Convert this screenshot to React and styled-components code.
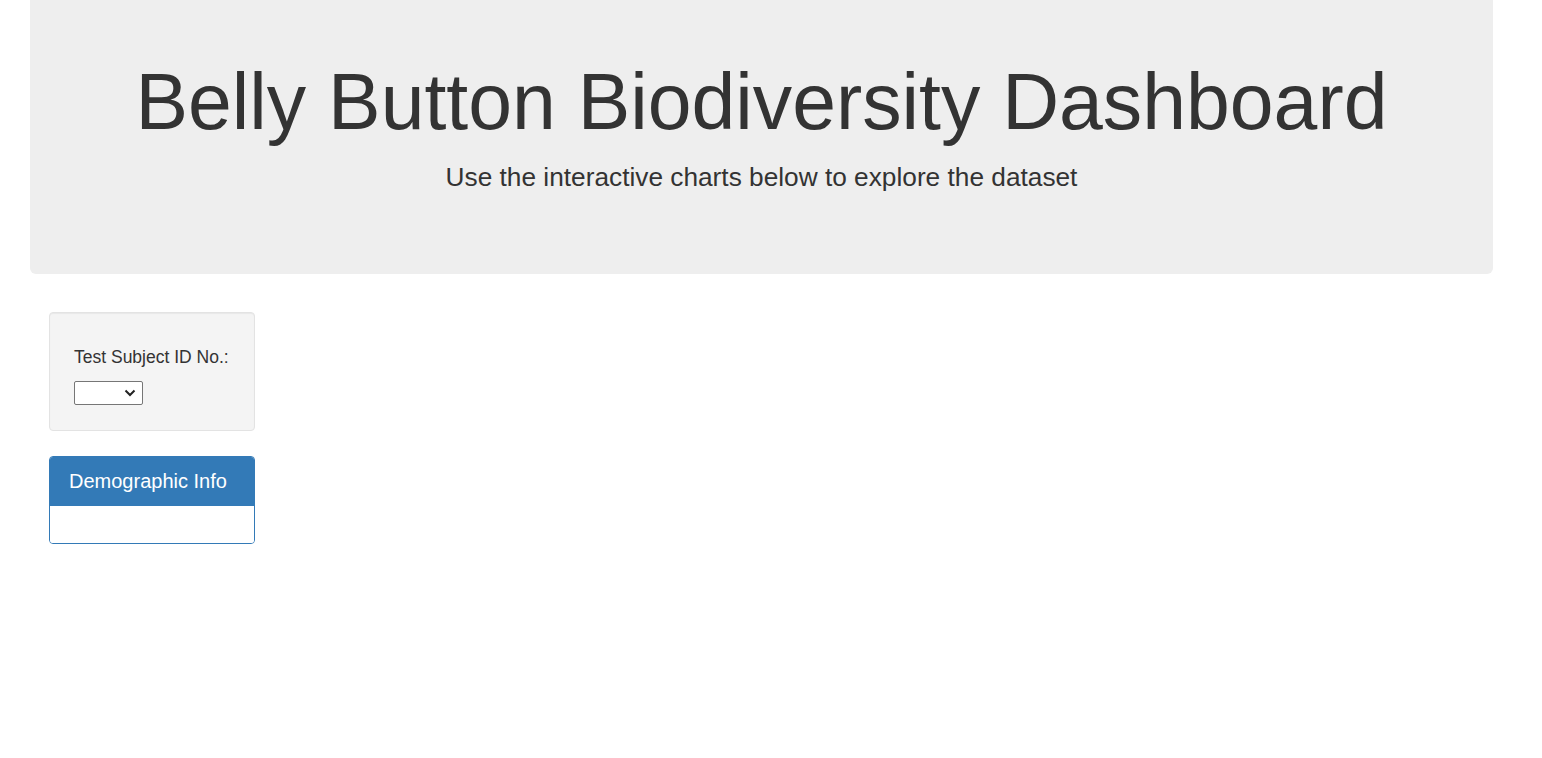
import React from "react";
import styled, { createGlobalStyle } from "styled-components";

const GlobalStyle = createGlobalStyle`
  body {
    margin: 0;
    background: #fff;
    color: #333;
    font-family: "Liberation Sans", Arial, sans-serif;
  }
`;

const Page = styled.div`
  padding: 0 30px;
  width: 1463px;
`;

const Jumbotron = styled.header`
  background-color: #eee;
  height: 274px;
  box-sizing: border-box;
  padding-top: 59px;
  border-radius: 0 0 6px 6px;
  text-align: center;
`;

const Title = styled.h1`
  margin: 0;
  font-size: 78.75px;
  font-weight: 400;
  line-height: 1.1;
  color: #333;
`;

const Lead = styled.p`
  margin: 13px 0 0;
  font-size: 26.25px;
  line-height: 1.4;
  color: #333;
`;

const Row = styled.div`
  display: flex;
  padding: 38px 0 0 19px;
`;

const Sidebar = styled.aside`
  width: 206px;
  display: flex;
  flex-direction: column;
  gap: 25px;
`;

const Well = styled.div`
  box-sizing: border-box;
  height: 119px;
  padding: 33px 20px 0 24px;
  background-color: #f4f4f4;
  border: 1px solid #e3e3e3;
  border-radius: 4px;
  box-shadow: inset 0 1px 1px rgba(0, 0, 0, 0.05);
`;

const Label = styled.label`
  display: block;
  font-size: 17.5px;
  line-height: 22px;
  color: #333;
  white-space: nowrap;
`;

const SelectBox = styled.div`
  position: relative;
  margin-top: 13px;
  width: 69px;
  height: 24px;
  box-sizing: border-box;
  border: 1px solid #767676;
  border-radius: 2px;
  background: #fff;
`;

const Chevron = styled.svg`
  position: absolute;
  right: 6px;
  top: 7px;
`;

const Panel = styled.section`
  border: 1px solid #337ab7;
  border-radius: 4px;
  overflow: hidden;
`;

const PanelHeading = styled.div`
  background-color: #337ab7;
  color: #fff;
  height: 49px;
  box-sizing: border-box;
  padding: 12px 19px;
  font-size: 20px;
  line-height: 24px;
`;

const PanelBody = styled.div`
  height: 37px;
  background: #fff;
`;

export default function App() {
  return (
    <>
      <GlobalStyle />
      <Page>
        <Jumbotron>
          <Title>Belly Button Biodiversity Dashboard</Title>
          <Lead>Use the interactive charts below to explore the dataset</Lead>
        </Jumbotron>
        <Row>
          <Sidebar>
            <Well>
              <Label>Test Subject ID No.:</Label>
              <SelectBox>
                <Chevron width="12" height="8" viewBox="0 0 12 8">
                  <path d="M1.5 1.5 L6 6 L10.5 1.5" fill="none" stroke="#222" strokeWidth="2" />
                </Chevron>
              </SelectBox>
            </Well>
            <Panel>
              <PanelHeading>Demographic Info</PanelHeading>
              <PanelBody />
            </Panel>
          </Sidebar>
        </Row>
      </Page>
    </>
  );
}
